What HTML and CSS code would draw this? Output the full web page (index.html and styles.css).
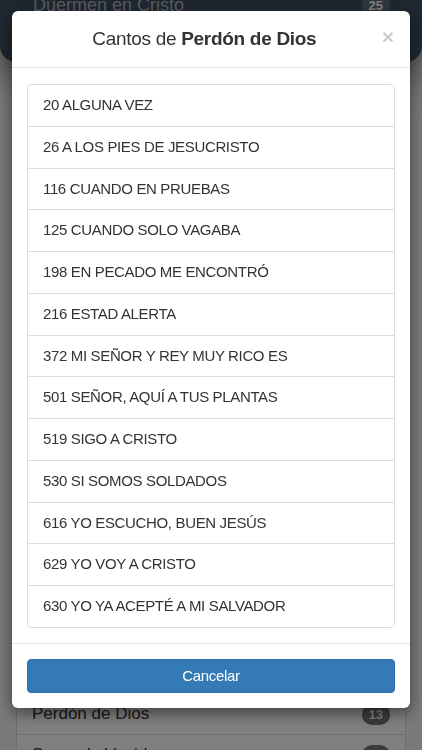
FILE: index.html
```html
<!DOCTYPE html>
<html lang="es">
<head>
<meta charset="utf-8">
<title>Cantos de Perdón de Dios</title>
<link rel="stylesheet" href="styles.css">
</head>
<body>
<div class="page">
  <div class="topbar">
    <div class="topbar-row"><span>Duermen en Cristo</span><span class="badge">25</span></div>
  </div>
  <ul class="cat-list">
    <li class="cat-item"><span>Adoración</span><span class="badge">40</span></li>
    <li class="cat-item"><span>Alabanza</span><span class="badge">52</span></li>
    <li class="cat-item"><span>Amor de Dios</span><span class="badge">18</span></li>
    <li class="cat-item"><span>Bautismo</span><span class="badge">9</span></li>
    <li class="cat-item"><span>Cena del Señor</span><span class="badge">12</span></li>
    <li class="cat-item"><span>Consagración</span><span class="badge">30</span></li>
    <li class="cat-item"><span>Consuelo</span><span class="badge">21</span></li>
    <li class="cat-item"><span>Esperanza</span><span class="badge">15</span></li>
    <li class="cat-item"><span>Evangelismo</span><span class="badge">27</span></li>
    <li class="cat-item"><span>Fe</span><span class="badge">19</span></li>
    <li class="cat-item"><span>Gozo</span><span class="badge">11</span></li>
    <li class="cat-item"><span>Invitación</span><span class="badge">24</span></li>
    <li class="cat-item"><span>Jesucristo</span><span class="badge">33</span></li>
    <li class="cat-item"><span>Oración</span><span class="badge">14</span></li>
    <li class="cat-item"><span>Paz</span><span class="badge">8</span></li>
    <li class="cat-item"><span>Perdón de Dios</span><span class="badge">13</span></li>
    <li class="cat-item"><span>Segunda Venida</span><span class="badge">22</span></li>
  </ul>
</div>

<div class="backdrop"></div>

<div class="modal">
  <div class="modal-content">
    <div class="modal-header">
      <h4 class="modal-title">Cantos de <b>Perdón de Dios</b></h4>
      <button class="close" type="button">×</button>
    </div>
    <div class="modal-body">
      <ul class="list-group">
        <li class="list-group-item">20 ALGUNA VEZ</li>
        <li class="list-group-item">26 A LOS PIES DE JESUCRISTO</li>
        <li class="list-group-item">116 CUANDO EN PRUEBAS</li>
        <li class="list-group-item">125 CUANDO SOLO VAGABA</li>
        <li class="list-group-item">198 EN PECADO ME ENCONTRÓ</li>
        <li class="list-group-item">216 ESTAD ALERTA</li>
        <li class="list-group-item">372 MI SEÑOR Y REY MUY RICO ES</li>
        <li class="list-group-item">501 SEÑOR, AQUÍ A TUS PLANTAS</li>
        <li class="list-group-item">519 SIGO A CRISTO</li>
        <li class="list-group-item">530 SI SOMOS SOLDADOS</li>
        <li class="list-group-item">616 YO ESCUCHO, BUEN JESÚS</li>
        <li class="list-group-item">629 YO VOY A CRISTO</li>
        <li class="list-group-item">630 YO YA ACEPTÉ A MI SALVADOR</li>
      </ul>
    </div>
    <div class="modal-footer">
      <button class="btn-primary" type="button">Cancelar</button>
    </div>
  </div>
</div>
</body>
</html>
```
FILE: styles.css
```css
* { box-sizing: border-box; }
html, body {
  margin: 0;
  padding: 0;
  height: 100%;
  overflow: hidden;
}
body {
  font-family: "Liberation Sans", Arial, Helvetica, sans-serif;
  font-size: 15px;
  color: #333;
  background: #f4f4f4;
}

/* underlying page */
.page {
  display: flex;
  flex-direction: column;
}
.topbar {
  background: #3e4e60;
  height: 72px;
  margin-top: -10px;
  border-radius: 0 0 16px 16px;
  box-shadow: 0 10px 40px rgba(0,0,0,0.6);
  padding: 0 32px 0 33px;
  color: #aeb6c0;
  font-size: 18px;
}
.topbar-row {
  display: flex;
  justify-content: space-between;
  align-items: center;
  height: 30px;
}
.topbar .badge { background: #5f6c7a; }
.cat-list {
  list-style: none;
  margin: 15px 16px 0;
  padding: 0;
  background: #fff;
  border: 1px solid #ddd;
}
.cat-item {
  display: flex;
  justify-content: space-between;
  align-items: center;
  height: 41px;
  padding: 0 15px;
  border-top: 1px solid #ddd;
  font-size: 17px;
}
.cat-item:first-child { border-top: 0; }
.badge {
  display: inline-block;
  min-width: 28px;
  padding: 3px 7px;
  border-radius: 10px;
  background: #777;
  color: #fff;
  font-size: 13px;
  font-weight: bold;
  text-align: center;
}

/* modal overlay */
.backdrop {
  position: fixed;
  inset: 0;
  background: rgba(0,0,0,0.5);
}
.modal {
  position: fixed;
  top: 11px;
  left: 12px;
  right: 12px;
}
.modal-content {
  background: #fff;
  border-radius: 6px;
  box-shadow: 0 5px 15px rgba(0,0,0,0.5);
}
.modal-header {
  display: flex;
  align-items: flex-start;
  padding: 15px 16px 15px 15px;
  border-bottom: 1px solid #e5e5e5;
}
.modal-title {
  flex: 1;
  margin: 0;
  font-size: 19px;
  font-weight: normal;
  line-height: 26px;
  letter-spacing: -0.3px;
  text-align: center;
  color: #333;
}
.modal-title b { font-weight: bold; }
.close {
  flex: none;
  padding: 0;
  border: 0;
  background: transparent;
  font-family: "Liberation Sans", Arial, sans-serif;
  font-size: 21px;
  font-weight: bold;
  line-height: 21px;
  color: #000;
  opacity: 0.2;
}
.modal-body {
  padding: 16px 15px 15px;
}
.list-group {
  list-style: none;
  margin: 0;
  padding: 0;
}
.list-group-item {
  padding: 10px 15px;
  line-height: 20.75px;
  font-size: 15px;
  letter-spacing: -0.35px;
  background: #fff;
  border: 1px solid #ddd;
  margin-bottom: -1px;
}
.list-group-item:first-child { border-radius: 4px 4px 0 0; }
.list-group-item:last-child { border-radius: 0 0 4px 4px; margin-bottom: 0; }
.modal-footer {
  padding: 15px;
  border-top: 1px solid #e5e5e5;
}
.btn-primary {
  display: block;
  width: 100%;
  height: 34px;
  padding: 6px 12px;
  border: 1px solid #2e6da4;
  border-radius: 4px;
  background: #337ab7;
  color: #fff;
  font-family: "Liberation Sans", Arial, sans-serif;
  font-size: 15px;
  letter-spacing: -0.3px;
  line-height: 20px;
}
```
